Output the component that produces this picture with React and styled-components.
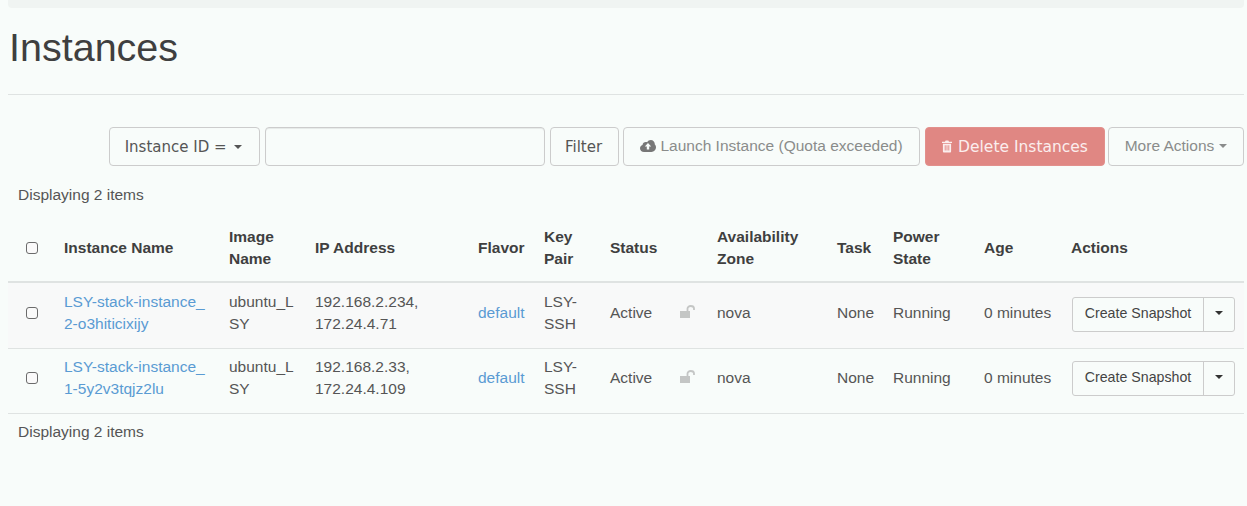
import React from "react";
import styled, { createGlobalStyle } from "styled-components";

const COLOR = {
  BG: "#f8fcfa",
  BAR: "#f0f4f2",
  LINE: "#dfe3e2",
  TEXT: "#333",
  LINK: "#5a9bd3",
  BORDER: "#ccc",
  DANGER: "#e08783",
};

const COLUMNS = [48, 165, 86, 163, 66, 66, 70, 37, 120, 56, 91, 87, 181];

const instances = [
  { id: "2-o3hiticixijy", ip: "192.168.2.234,", floating: "172.24.4.71", height: 66 },
  { id: "1-5y2v3tqjz2lu", ip: "192.168.2.33,", floating: "172.24.4.109", height: 65 },
];

const App = () => {
  return (
    <>
      <GlobalStyle />
      <Page>
        <TopBar />
        <Title>Instances</Title>
        <Toolbar>
          <SelectButton $width={151}>
            Instance ID = <Caret />
          </SelectButton>
          <SearchInput />
          <FilterButton $width={69}>Filter</FilterButton>
          <Button $width={297} $muted>
            <CloudIcon />
            Launch Instance (Quota exceeded)
          </Button>
          <DangerButton>
            <TrashIcon />
            Delete Instances
          </DangerButton>
          <MoreButton $width={136} $muted>
            More Actions <Caret $gap={5} />
          </MoreButton>
        </Toolbar>
        <Summary>Displaying 2 items</Summary>
        <Table>
          <colgroup>
            {COLUMNS.map((width, index) => (
              <col key={index} style={{ width }} />
            ))}
          </colgroup>
          <thead>
            <tr>
              <Head><Check /></Head>
              <Head>Instance Name</Head>
              <Head>Image Name</Head>
              <Head>IP Address</Head>
              <Head>Flavor</Head>
              <Head>Key Pair</Head>
              <Head colSpan={2}>Status</Head>
              <Head>Availability Zone</Head>
              <Head>Task</Head>
              <Head>Power State</Head>
              <Head>Age</Head>
              <Head>Actions</Head>
            </tr>
          </thead>
          <tbody>
            {instances.map((item, index) => (
              <Row key={item.id} $odd={index === 0} $height={item.height}>
                <Cell><Check /></Cell>
                <Cell>
                  <Link>LSY-stack-instance_<br />{item.id}</Link>
                </Cell>
                <Cell>ubuntu_L<br />SY</Cell>
                <Cell>{item.ip}<br />{item.floating}</Cell>
                <Cell><Link>default</Link></Cell>
                <Cell>LSY-<br />SSH</Cell>
                <Cell>Active</Cell>
                <Cell><LockIcon /></Cell>
                <Cell>nova</Cell>
                <Cell>None</Cell>
                <Cell>Running</Cell>
                <Cell>0 minutes</Cell>
                <Cell>
                  <SplitButton>
                    <SplitLabel>Create Snapshot</SplitLabel>
                    <SplitToggle><DarkCaret /></SplitToggle>
                  </SplitButton>
                </Cell>
              </Row>
            ))}
          </tbody>
        </Table>
        <Summary $bottom>Displaying 2 items</Summary>
      </Page>
    </>
  );
};
export default App;

const CloudIcon = () => (
  <Glyph width="16" height="12" viewBox="0 0 16 12">
    <path
      fill="#777"
      d="M4 12C1.8 12 0 10.4 0 8.3 0 6.7 1 5.4 2.5 4.9 2.7 3.2 4.1 2 5.8 2c.5 0 1 .1 1.4.3C7.9.9 9.3 0 10.8 0c2.2 0 4 1.8 4 3.9v.5c.8.6 1.2 1.6 1.2 2.7 0 2.7-2 4.9-4.5 4.9H4zm4-9L4.8 6.6h2v3h2.4v-3h2L8 3z"
    />
  </Glyph>
);

const TrashIcon = () => (
  <TrashGlyph width="10" height="13" viewBox="0 0 11 13">
    <path
      fill="#fbeeee"
      fillRule="evenodd"
      d="M4 0h3l.7 1.3H11v1.4H0V1.3h3.3L4 0zM1 3.5h9V12a1 1 0 0 1-1 1H2a1 1 0 0 1-1-1V3.5zM3 5v6h1V5H3zm2 0v6h1V5H5zm2 0v6h1V5H7z"
    />
  </TrashGlyph>
);

const LockIcon = () => (
  <svg width="16" height="13" viewBox="0 0 16 13">
    <path fill="#c4c6c5" d="M0 6h10v7H0z" />
    <path fill="none" stroke="#c4c6c5" strokeWidth="1.8" d="M7.5 6V3.5C7.5 2 9 1 10.7 1s3.3 1 3.3 2.5V5" />
  </svg>
);

const GlobalStyle = createGlobalStyle`
  html, body {
    margin: 0;
    background-color: ${COLOR.BG};
  }
  body {
    font-family: "Liberation Sans", Arial, sans-serif;
    font-size: 15.5px;
    line-height: 22px;
    color: ${COLOR.TEXT};
  }
`;

const Page = styled.div`
  padding: 0 3px 0 8px;
  height: 506px;
  box-sizing: border-box;
  overflow: hidden;
`;

const TopBar = styled.div`
  height: 8px;
  background-color: ${COLOR.BAR};
  border-radius: 0 0 4px 4px;
`;

const Title = styled.h1`
  margin: 0;
  padding: 18px 0 26px 1px;
  height: 87px;
  box-sizing: border-box;
  border-bottom: 1px solid ${COLOR.LINE};
  font-size: 39.5px;
  line-height: 43px;
  font-weight: 400;
  color: #3f3f3f;
`;

const Toolbar = styled.div`
  display: flex;
  justify-content: flex-end;
  margin-top: 32px;
  height: 39px;
`;

const Button = styled.div`
  display: flex;
  align-items: center;
  justify-content: center;
  box-sizing: border-box;
  width: ${(props) => props.$width}px;
  margin-left: 4px;
  padding-bottom: ${(props) => (props.$muted ? "2px" : "0")};
  border: 1px solid ${COLOR.BORDER};
  border-radius: 4px;
  color: ${(props) => (props.$muted ? "#8a8c8b" : COLOR.TEXT)};
  background-color: ${COLOR.BG};
  white-space: nowrap;
`;

const SelectButton = styled(Button)`
  padding-right: 2px;
  font-family: "DejaVu Sans", sans-serif;
  font-size: 15px;
  color: #555;
  white-space: pre;
`;

const FilterButton = styled(Button)`
  margin-left: 5px;
  padding-right: 2px;
  font-family: "DejaVu Sans", sans-serif;
  font-size: 15px;
  color: #555;
`;

const MoreButton = styled(Button)`
  margin-left: 3px;
`;

const DangerButton = styled(Button)`
  width: 180px;
  margin-left: 5px;
  font-family: "DejaVu Sans", sans-serif;
  font-size: 15.5px;
  color: #fbeeee;
  background-color: ${COLOR.DANGER};
  border-color: #e2908c;
`;

const SearchInput = styled.div`
  box-sizing: border-box;
  width: 280px;
  margin-left: 5px;
  border: 1px solid ${COLOR.BORDER};
  border-radius: 4px;
  box-shadow: inset 0 1px 1px rgba(0, 0, 0, 0.075);
`;

const Caret = styled.span`
  display: inline-block;
  margin-left: ${(props) => props.$gap ?? 3}px;
  border-top: 4px solid currentColor;
  border-left: 4px solid transparent;
  border-right: 4px solid transparent;
`;

const DarkCaret = styled(Caret)`
  margin-left: 0;
  color: #333;
`;

const Glyph = styled.svg`
  margin-right: 4px;
  flex: none;
`;

const TrashGlyph = styled(Glyph)`
  margin-right: 6px;
`;

const Summary = styled.div`
  padding: 0 10px;
  margin-top: ${(props) => (props.$bottom ? "7px" : "18px")};
  line-height: 22px;
  color: #555;
`;

const Table = styled.table`
  width: 1236px;
  margin-top: 9px;
  table-layout: fixed;
  border-collapse: collapse;
`;

const Head = styled.th`
  height: 67px;
  padding: 8px;
  box-sizing: border-box;
  text-align: left;
  vertical-align: middle;
  font-weight: 700;
  color: #3f3f3f;
  border-bottom: 2px solid ${COLOR.LINE};
`;

const Row = styled.tr`
  height: ${(props) => props.$height}px;
  background-color: ${(props) => (props.$odd ? "#f8f9f9" : "transparent")};
  border-bottom: 1px solid ${COLOR.LINE};
`;

const Cell = styled.td`
  padding: 8px 8px 12px;
  box-sizing: border-box;
  vertical-align: middle;
  color: #555;
  overflow: hidden;

  tr:last-child > & {
    padding-top: 6px;
    padding-bottom: 12px;
  }
`;

const Link = styled.span`
  color: ${COLOR.LINK};
`;

const Check = styled.span`
  display: block;
  box-sizing: border-box;
  width: 12px;
  height: 12px;
  margin-left: 10px;
  border: 1.5px solid #6b6b6b;
  border-radius: 3px;
  background-color: #fafafa;
`;

const SplitButton = styled.div`
  display: flex;
  box-sizing: border-box;
  width: 163px;
  height: 35px;
  margin: 2px 0 0 1px;
  border: 1px solid ${COLOR.BORDER};
  border-radius: 3px;
  background-color: ${COLOR.BG};
`;

const SplitLabel = styled.div`
  flex: 1;
  display: flex;
  align-items: center;
  justify-content: center;
  padding-bottom: 3px;
  font-size: 14.2px;
  color: #444;
`;

const SplitToggle = styled.div`
  box-sizing: border-box;
  width: 31px;
  display: flex;
  align-items: center;
  justify-content: center;
  padding-bottom: 3px;
  border-left: 1px solid ${COLOR.BORDER};
`;
